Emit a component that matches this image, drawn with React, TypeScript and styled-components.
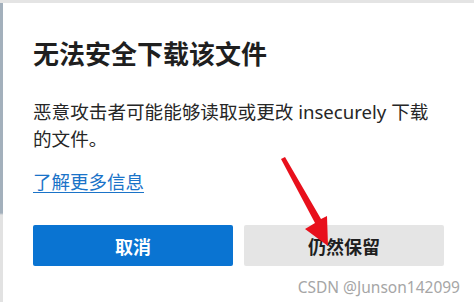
import styled, { createGlobalStyle } from 'styled-components';

const GlobalStyle = createGlobalStyle`
  html, body {
    margin: 0;
    padding: 0;
    background: #ffffff;
  }
  body {
    font-family: "Noto Sans", "Noto Sans CJK SC", sans-serif;
  }
`;

const Screen = styled.div`
  position: relative;
  width: 474px;
  height: 302px;
  overflow: hidden;
  display: flex;
  border-top: 3px solid #e4e4e4;
  box-sizing: border-box;
`;

const SideStrip = styled.div`
  width: 3px;
  flex: none;
  background: linear-gradient(to bottom, #a3b0bc 0, #a3b0bc 210px, #e2e2e2 212px);
`;

const Dialog = styled.div`
  flex: 1;
  display: flex;
  flex-direction: column;
  padding: 33px 27px 0 30px;
  background: #ffffff;
`;

const Title = styled.h1`
  margin: 0;
  font-family: "Noto Sans CJK SC", sans-serif;
  font-size: 26px;
  font-weight: 700;
  line-height: 34px;
  color: #1f1f1f;
`;

const Message = styled.p`
  margin: 28px 0 0;
  font-family: "Noto Sans", "Noto Sans CJK SC", sans-serif;
  font-size: 18.6px;
  line-height: 27px;
  color: #262626;
`;

const LearnMore = styled.a`
  align-self: flex-start;
  margin-top: 17px;
  font-family: "Noto Sans CJK SC", sans-serif;
  font-size: 18.5px;
  line-height: 24px;
  color: #1a73c8;
  text-decoration: underline;
  text-underline-offset: 3px;
  text-decoration-thickness: 1px;
`;

const ButtonRow = styled.div`
  display: grid;
  grid-template-columns: 200px 200px;
  gap: 11px;
  margin-top: 32px;
`;

const Button = styled.button<{ $primary?: boolean }>`
  height: 41px;
  border: none;
  border-radius: 2px;
  font-family: "Noto Sans CJK SC", sans-serif;
  font-size: 18px;
  font-weight: 700;
  background: ${p => (p.$primary ? '#0a74d2' : '#e5e5e5')};
  color: ${p => (p.$primary ? '#ffffff' : '#1f1f1f')};
`;

const Watermark = styled.div`
  align-self: flex-end;
  margin: 11px -13px 0 0;
  font-family: "Noto Sans", sans-serif;
  font-size: 15.5px;
  line-height: 20px;
  color: #a6a6a6;
`;

const Arrow = styled.svg`
  position: absolute;
  left: 276px;
  top: 150px;
`;

export default function App() {
  return (
    <>
      <GlobalStyle />
      <Screen>
        <SideStrip />
        <Dialog>
          <Title>无法安全下载该文件</Title>
          <Message>
            恶意攻击者可能能够读取或更改 insecurely 下载
            <br />
            的文件。
          </Message>
          <LearnMore href="#">了解更多信息</LearnMore>
          <ButtonRow>
            <Button $primary>取消</Button>
            <Button>仍然保留</Button>
          </ButtonRow>
          <Watermark>CSDN @Junson142099</Watermark>
        </Dialog>
        <Arrow width="60" height="100" viewBox="0 0 60 100">
          <path d="M5 6 L9 4 L45 66 L51 63 L52 93 L29 76 L39 70 Z" fill="#e8101c" />
        </Arrow>
      </Screen>
    </>
  );
}
